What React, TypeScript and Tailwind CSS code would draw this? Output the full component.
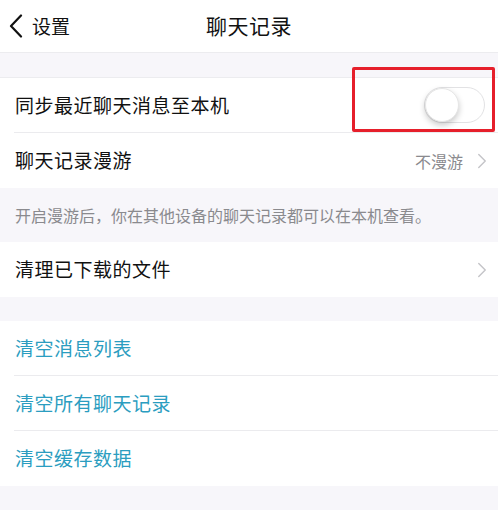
import { ChevronRight } from 'lucide-react';

const font = { fontFamily: '"Noto Sans CJK SC", "Noto Sans", sans-serif' };

const Row = ({ label, right, chevron, last, blue }: { label: string; right?: string; chevron?: boolean; last?: boolean; blue?: boolean }) => (
  <div className="bg-white pl-[14px]">
    <div className={`h-[55px] flex items-center pr-[3px] ${last ? '' : 'border-b border-[#ebebee]'}`}>
      <span className={`flex-1 pl-[1px] text-[19px] tracking-[0.5px] ${blue ? 'text-[#2b9dc0]' : 'text-[#111]'}`}>{label}</span>
      {right && <span className="text-[16px] text-[#8a8a8e] mr-[6px]">{right}</span>}
      {chevron && <ChevronRight size={26} strokeWidth={1.3} className="text-[#c4c4c8]" />}
    </div>
  </div>
);

export default function App() {
  return (
    <div style={font} className="w-[498px] h-[510px] bg-[#f7f6fa] overflow-hidden">
      {/* Header */}
      <div className="h-[53px] bg-white border-b border-[#ececef] flex items-center relative">
        <svg width="14" height="24" viewBox="0 0 14 24" className="ml-[9px]">
          <path d="M12 1.5 L2 12 L12 22.5" fill="none" stroke="#111" strokeWidth="2.2" strokeLinecap="round" strokeLinejoin="round" />
        </svg>
        <span className="text-[19px] text-[#111] ml-[9px]">设置</span>
        <span className="absolute left-0 right-0 text-center text-[21px] tracking-[0.5px] text-[#111] pointer-events-none">聊天记录</span>
      </div>

      <div className="h-[24px]" />

      <div className="relative border-t border-[#ececef]">
        <div className="bg-white pl-[14px]">
          <div className="h-[55px] flex items-center border-b border-[#ebebee] pr-[13px]">
            <span className="flex-1 pl-[1px] text-[19px] tracking-[0.5px] text-[#111]">同步最近聊天消息至本机</span>
            <div className="w-[61px] h-[36px] rounded-full border border-[#e2e2e4] bg-white relative">
              <div className="absolute left-0 top-0 w-[34px] h-[34px] rounded-full bg-white shadow-[0_3px_6px_rgba(0,0,0,0.22)] border border-[#e6e6e6]" />
            </div>
          </div>
        </div>
        {/* red highlight box */}
        <div className="absolute left-[352px] top-[-11px] w-[143px] h-[65px] border-[3px] border-[#e61f2b] rounded-[2px]" />
        <Row label="聊天记录漫游" right="不漫游" chevron last />
      </div>

      <div className="h-[54px] flex items-center pl-[15px] text-[16px] text-[#8a8a8e]">
        开启漫游后，你在其他设备的聊天记录都可以在本机查看。
      </div>

      <Row label="清理已下载的文件" chevron last />

      <div className="h-[24px]" />

      <Row label="清空消息列表" blue />
      <Row label="清空所有聊天记录" blue />
      <Row label="清空缓存数据" blue last />
    </div>
  );
}
